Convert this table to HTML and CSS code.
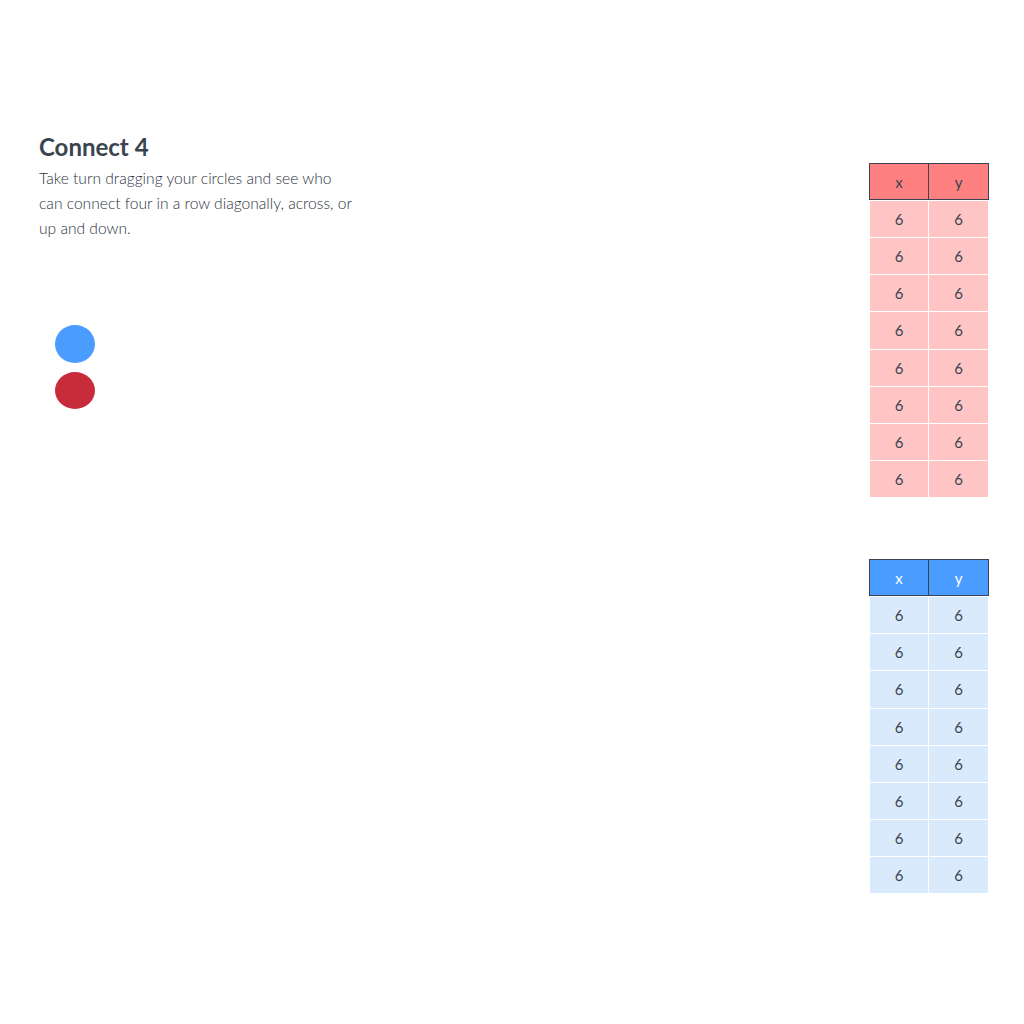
FILE: index.html
```html
<!DOCTYPE html>
<html lang="en">
<head>
<meta charset="utf-8">
<title>Connect 4</title>
<link rel="stylesheet" href="styles.css">
</head>
<body>
<div class="page">
  <section class="intro">
    <h1 class="title">Connect 4</h1>
    <p class="desc">Take turn dragging your circles and see who can connect four in a row diagonally, across, or up and down.</p>
    <div class="pieces">
      <div class="piece piece-blue"></div>
      <div class="piece piece-red"></div>
    </div>
  </section>
  <aside class="tables">
    <div class="grid grid-red">
      <div class="head"><div class="hcell">x</div><div class="hcell">y</div></div>
      <div class="rows">
        <div class="row"><div class="cell">6</div><div class="cell">6</div></div>
        <div class="row"><div class="cell">6</div><div class="cell">6</div></div>
        <div class="row"><div class="cell">6</div><div class="cell">6</div></div>
        <div class="row"><div class="cell">6</div><div class="cell">6</div></div>
        <div class="row"><div class="cell">6</div><div class="cell">6</div></div>
        <div class="row"><div class="cell">6</div><div class="cell">6</div></div>
        <div class="row"><div class="cell">6</div><div class="cell">6</div></div>
        <div class="row"><div class="cell">6</div><div class="cell">6</div></div>
      </div>
    </div>
    <div class="grid grid-blue">
      <div class="head"><div class="hcell">x</div><div class="hcell">y</div></div>
      <div class="rows">
        <div class="row"><div class="cell">6</div><div class="cell">6</div></div>
        <div class="row"><div class="cell">6</div><div class="cell">6</div></div>
        <div class="row"><div class="cell">6</div><div class="cell">6</div></div>
        <div class="row"><div class="cell">6</div><div class="cell">6</div></div>
        <div class="row"><div class="cell">6</div><div class="cell">6</div></div>
        <div class="row"><div class="cell">6</div><div class="cell">6</div></div>
        <div class="row"><div class="cell">6</div><div class="cell">6</div></div>
        <div class="row"><div class="cell">6</div><div class="cell">6</div></div>
      </div>
    </div>
  </aside>
</div>
</body>
</html>
```

FILE: styles.css
```css
html, body {
  margin: 0;
  padding: 0;
  background: #ffffff;
}

body {
  font-family: Lato, "Open Sans", "Liberation Sans", sans-serif;
  color: #3a4450;
}

.page {
  display: flex;
  justify-content: space-between;
  align-items: flex-start;
  padding: 132px 35px 0 39px;
  height: 1024px;
  box-sizing: border-box;
}

.intro {
  width: 316px;
}

.title {
  margin: 0;
  font-size: 24px;
  font-weight: 700;
  line-height: 29px;
  color: #3a4450;
}

.desc {
  margin: 5px 0 0;
  font-size: 15.6px;
  font-weight: 300;
  line-height: 25px;
  color: #2c343e;
}

.pieces {
  display: flex;
  flex-direction: column;
  gap: 9px;
  margin: 84px 0 0 16px;
}

.piece {
  width: 40px;
  height: 38px;
  border-radius: 50%;
}

.piece-blue { background: #4a9cff; }
.piece-red { background: #c82b3a; height: 37px; }

.tables {
  display: flex;
  flex-direction: column;
  gap: 62px;
  margin-top: 31px;
  width: 120px;
}

.head {
  display: flex;
  height: 37px;
  border: 1px solid #3a4450;
  box-sizing: border-box;
  margin-bottom: 1px;
}

.hcell {
  flex: 1;
  display: flex;
  align-items: center;
  justify-content: center;
  font-size: 15px;
  font-weight: 400;
  padding-top: 1px;
}

.hcell:first-child {
  flex: 0 0 58px;
}

.hcell + .hcell {
  border-left: 1px solid #3a4450;
}

.rows {
  display: flex;
  flex-direction: column;
  gap: 1px;
  padding: 0 1px;
}

.row {
  display: flex;
  gap: 1px;
  height: 36.15px;
}

.cell {
  flex: 1;
  display: flex;
  align-items: center;
  justify-content: center;
  font-size: 15px;
  font-weight: 400;
  color: #3a4450;
}

.cell:first-child {
  flex: 0 0 58px;
}

.grid-red .head { background: #ff8080; color: #3a4450; }
.grid-red .cell { background: #ffc4c4; }

.grid-blue .head { background: #4a9cff; color: #ffffff; }
.grid-blue .cell { background: #d9eafc; }
```
